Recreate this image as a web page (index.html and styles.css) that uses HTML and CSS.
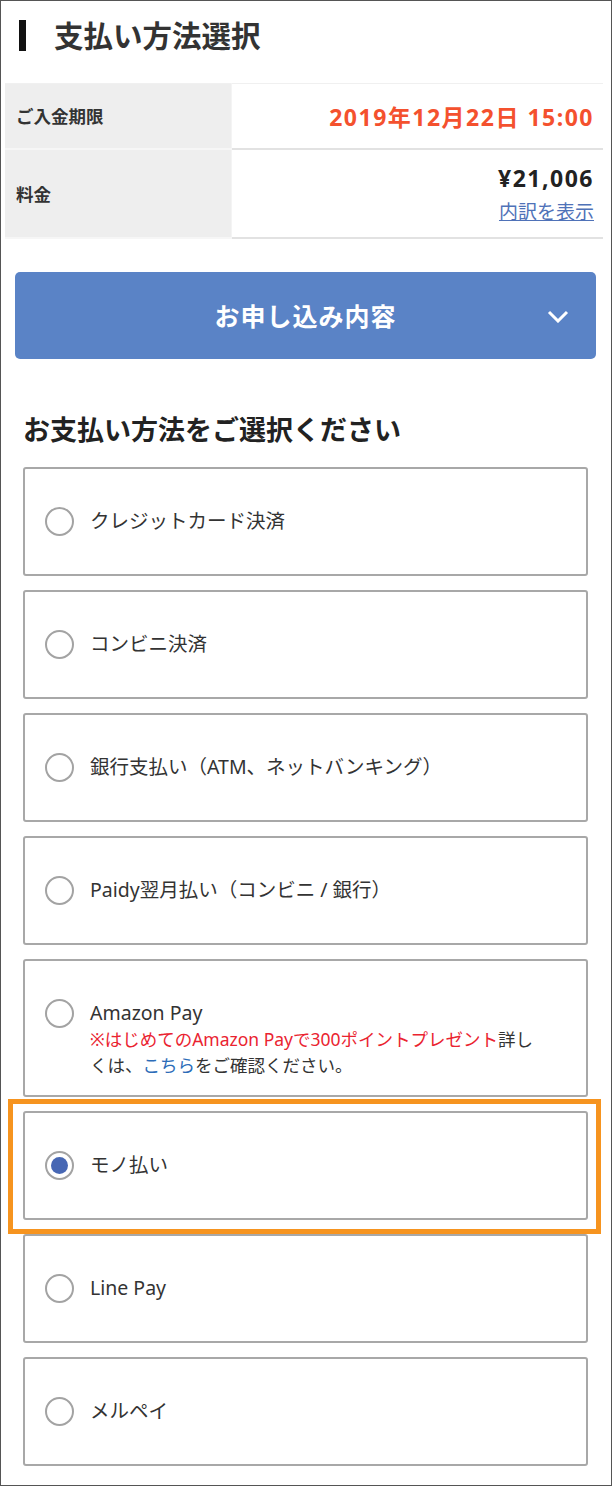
FILE: index.html
```html
<!DOCTYPE html>
<html lang="ja">
<head>
<meta charset="utf-8">
<title>支払い方法選択</title>
<link rel="stylesheet" href="styles.css">
</head>
<body>
<div class="frame">
  <h1 class="title"><span class="title-bar"></span>支払い方法選択</h1>

  <table class="summary">
    <tr class="row-deadline">
      <th>ご入金期限</th>
      <td><span class="deadline">2019年12月22日 15:00</span></td>
    </tr>
    <tr class="row-fee">
      <th>料金</th>
      <td>
        <span class="price">¥21,006</span>
        <a class="breakdown" href="#">内訳を表示</a>
      </td>
    </tr>
  </table>

  <button class="accordion" type="button">
    <span class="accordion-label">お申し込み内容</span>
    <svg class="chevron" width="22" height="13" viewBox="0 0 22 13"><path d="M2 2 L11 11 L20 2" fill="none" stroke="#fff" stroke-width="3"/></svg>
  </button>

  <h2 class="choose">お支払い方法をご選択ください</h2>

  <ul class="methods">
    <li class="method"><span class="radio"></span><span class="method-text">クレジットカード決済</span></li>
    <li class="method"><span class="radio"></span><span class="method-text">コンビニ決済</span></li>
    <li class="method"><span class="radio"></span><span class="method-text">銀行支払い（ATM、ネットバンキング）</span></li>
    <li class="method"><span class="radio"></span><span class="method-text">Paidy翌月払い（コンビニ / 銀行）</span></li>
    <li class="method method-amazon">
      <span class="radio"></span>
      <div class="method-body">
        <span class="method-text">Amazon Pay</span>
        <p class="note"><span class="note-red">※はじめてのAmazon Payで300ポイントプレゼント</span>詳しくは、<a class="note-link" href="#">こちら</a>をご確認ください。</p>
      </div>
    </li>
    <li class="method method-selected"><span class="radio radio-checked"></span><span class="method-text">モノ払い</span><span class="highlight"></span></li>
    <li class="method"><span class="radio"></span><span class="method-text">Line Pay</span></li>
    <li class="method"><span class="radio"></span><span class="method-text">メルペイ</span></li>
  </ul>
</div>
</body>
</html>
```

FILE: styles.css
```css
* {
  box-sizing: border-box;
}

html, body {
  margin: 0;
  padding: 0;
  background: #fff;
}

body {
  font-family: "Noto Sans", "Noto Sans CJK JP", sans-serif;
  color: #333;
}

.frame {
  position: relative;
  width: 612px;
  height: 1486px;
  border: 1px solid #555;
  overflow: hidden;
  background: #fff;
}

.title {
  display: flex;
  align-items: center;
  margin: 19px 0 0 18px;
  height: 31px;
  font-size: 29.5px;
  line-height: 31px;
  font-weight: bold;
  color: #333;
}

.title-bar {
  display: block;
  width: 7px;
  height: 31px;
  background: #111;
  margin-right: 28px;
}

.summary {
  margin: 32px 0 0 4px;
  width: 598px;
  border-collapse: collapse;
  border-top: 1px solid #f0f0f0;
}

.summary th {
  width: 226px;
  background: #eeeeee;
  text-align: left;
  padding: 0 0 0 11px;
  font-size: 17.5px;
  font-weight: bold;
  color: #333;
  border-bottom: 2px solid #f6f6f6;
  border-right: 1px solid #f4f4f4;
}

.summary td {
  text-align: right;
  padding: 0 9px 0 0;
  border-bottom: 2px solid #e2e2e2;
}

.row-deadline th,
.row-deadline td {
  height: 65px;
}

.row-fee th,
.row-fee td {
  height: 89px;
}

.row-fee td {
  vertical-align: top;
  padding-top: 13px;
}

.deadline {
  font-size: 23px;
  font-weight: bold;
  letter-spacing: 1.5px;
  color: #f4512e;
}

.price {
  display: block;
  font-size: 23px;
  line-height: 30px;
  font-weight: bold;
  letter-spacing: 1.5px;
  color: #222;
}

.breakdown {
  display: inline-block;
  margin-top: 6px;
  font-size: 19px;
  line-height: 26px;
  color: #4f72b8;
  text-decoration: underline;
}

.accordion {
  position: relative;
  display: flex;
  align-items: center;
  justify-content: center;
  margin: 33px 0 0 14px;
  width: 581px;
  height: 87px;
  border: none;
  border-radius: 5px;
  background: #5a83c6;
  font-family: inherit;
  color: #fff;
  cursor: pointer;
}

.accordion-label {
  font-size: 25px;
  font-weight: bold;
  letter-spacing: 1px;
}

.chevron {
  position: absolute;
  right: 27px;
  top: 38px;
}

.choose {
  margin: 53px 0 0 22px;
  font-size: 27px;
  line-height: 36px;
  font-weight: bold;
  color: #222;
}

.methods {
  list-style: none;
  margin: 19px 0 0 22px;
  padding: 0;
  width: 565px;
  display: flex;
  flex-direction: column;
  gap: 14px;
}

.method {
  position: relative;
  display: flex;
  align-items: flex-start;
  min-height: 109px;
  padding: 39px 20px 17px 20px;
  border: 2px solid #a8a8a8;
  border-radius: 3px;
  background: #fff;
}

.radio {
  flex: none;
  display: flex;
  align-items: center;
  justify-content: center;
  width: 29px;
  height: 29px;
  margin-top: -1px;
  margin-right: 16px;
  border: 2px solid #a3a3a3;
  border-radius: 50%;
  background: #fff;
}

.radio-checked::after {
  content: "";
  width: 17px;
  height: 17px;
  border-radius: 50%;
  background: #4767b4;
}

.method-text {
  display: block;
  font-size: 19.5px;
  line-height: 26px;
  color: #333;
}

.method-body {
  flex: 1;
}

.note {
  margin: 0;
  max-width: 448px;
  font-size: 17.5px;
  line-height: 26px;
  color: #333;
}

.note-red {
  color: #ea2330;
}

.note-link {
  color: #2c6cb8;
  text-decoration: none;
}

.highlight {
  position: absolute;
  top: -14px;
  left: -17px;
  right: -15px;
  bottom: -16px;
  border: 5px solid #f6941f;
  pointer-events: none;
}
```
